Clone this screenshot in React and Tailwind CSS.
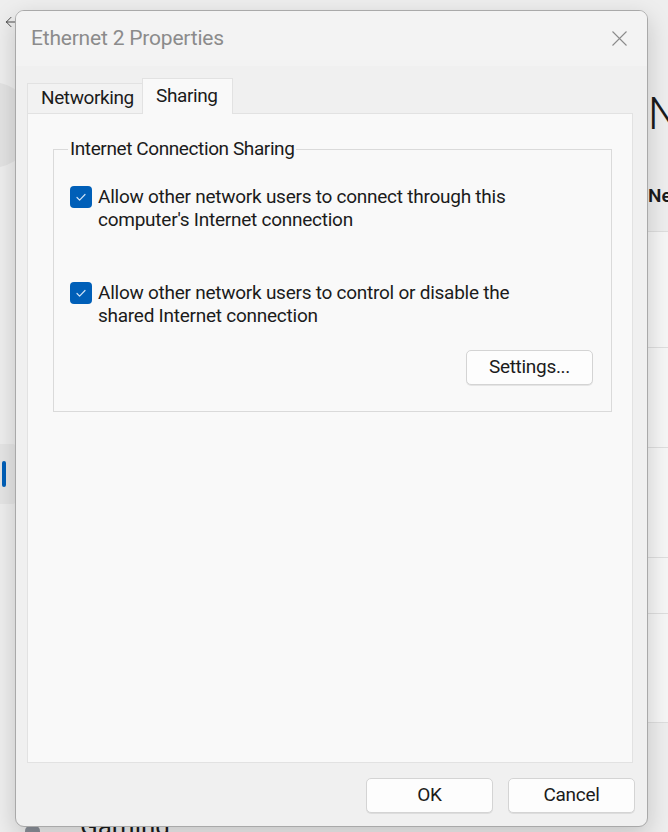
import { ArrowLeft } from "lucide-react"

const FONT = "font-['Roboto','Liberation_Sans',sans-serif]"

function Checkbox() {
  return (
    <span className="mt-[1px] flex h-[22px] w-[22px] shrink-0 items-center justify-center rounded-[4px] bg-[#005fb8]">
      <svg width="12" height="12" viewBox="0 0 12 12" fill="none">
        <path d="M2 6.5l2.6 2.6L10 3.5" stroke="#cfe3f7" strokeWidth="1.2" strokeLinecap="round" strokeLinejoin="round" />
      </svg>
    </span>
  )
}

function Option({ lines }) {
  return (
    <label className="flex items-start gap-[6px]">
      <Checkbox />
      <span className="text-[19px] leading-[23px] tracking-[-0.25px] text-[#1b1b1b]">
        {lines[0]}
        <br />
        {lines[1]}
      </span>
    </label>
  )
}

function WinButton({ children }) {
  return (
    <button
      type="button"
      className="flex h-[35px] w-[127px] items-center justify-center rounded-[5px] border border-[#d4d4d4] bg-[#fdfdfd] text-[19px] tracking-[-0.3px] text-[#1b1b1b] shadow-[0_1px_0_rgba(0,0,0,0.08)]"
    >
      {children}
    </button>
  )
}

function SettingsBackdrop() {
  return (
    <div className="flex h-full w-full">
      {/* left nav remnants */}
      <div className="flex w-[40px] flex-col">
        <div className="flex h-[44px] items-center pl-[3px] text-[#333]">
          <ArrowLeft size={16} strokeWidth={1.3} />
        </div>
        <div className="ml-[-52px] mt-[38px] h-[86px] w-[86px] rounded-full bg-[#e3e3e3]" />
        <div className="mt-[276px] flex h-[60px] w-[16px] items-center rounded-r-[4px] bg-[#e5e5e5] pl-[2px]">
          <span className="h-[26px] w-[4px] rounded-full bg-[#005fb8]" />
        </div>
        <div className="mt-auto flex items-center pl-[25px]">
          <span className="mb-[-14px] h-[22px] w-[22px] rounded-full bg-[#8a8f98]" />
        </div>
      </div>
      <div className="flex-1" />
      {/* right content remnants */}
      <div className="flex w-[20px] flex-col">
        <div className="mt-[92px] text-[44px] leading-none font-light text-[#1b1b1b]">N</div>
        <div className="mt-[46px] text-[19px] font-semibold text-[#1b1b1b]">Ne</div>
        <div className="mt-[20px] h-[116px] border-t border-[#dedede] bg-[#f6f6f6]" />
        <div className="h-[100px] border-t border-[#dedede] bg-[#f6f6f6]" />
        <div className="h-[110px] border-t border-[#dedede] bg-[#f6f6f6]" />
        <div className="h-[56px] border-t border-[#dedede] bg-[#f6f6f6]" />
        <div className="h-[110px] border-t border-b border-[#dedede] bg-[#f6f6f6]" />
      </div>
    </div>
  )
}

export default function App() {
  return (
    <div className={`relative h-[832px] w-[668px] overflow-hidden bg-[#eeeeee] ${FONT}`}>
      <SettingsBackdrop />
      <div className="absolute bottom-[-14px] left-[80px] text-[26px] text-[#1b1b1b]">Gaming</div>

      {/* dialog window */}
      <div className="absolute left-[15px] top-[10px] flex h-[817px] w-[633px] flex-col overflow-hidden rounded-[9px] border border-[#a9a9a9] bg-[#f0f0f0] shadow-[0_8px_24px_rgba(0,0,0,0.18)]">
        <div className="flex h-[55px] shrink-0 items-center justify-between bg-[#f3f3f3] pl-[15px] pr-[20px]">
          <span className="text-[21px] tracking-[-0.2px] text-[#8b8b8b]">Ethernet 2 Properties</span>
          <svg width="15" height="15" viewBox="0 0 15 15" fill="none">
            <path d="M0.5 0.5l14 14M14.5 0.5l-14 14" stroke="#8b8b8b" strokeWidth="1.1" />
          </svg>
        </div>

        <div className="flex flex-1 flex-col pl-[11px] pr-[14px] pt-[12px]">
          {/* tabs */}
          <div className="flex h-[35px] items-end">
            <div className="flex h-[30px] w-[115px] items-center border-l border-t border-[#e2e2e2] bg-[#f2f2f2] pl-[13px] text-[19px] tracking-[-0.4px] text-[#1b1b1b]">
              Networking
            </div>
            <div className="relative z-10 mb-[-1px] flex h-[36px] w-[91px] items-start border border-b-0 border-[#e2e2e2] bg-[#f9f9f9] pl-[13px] pt-[3px] text-[19px] tracking-[-0.4px] text-[#1b1b1b]">
              Sharing
            </div>
          </div>

          {/* tab panel */}
          <div className="h-[650px] border border-[#e2e2e2] bg-[#f9f9f9] pl-[25px] pr-[20px] pt-[21px]">
            <fieldset className="h-[277px] border border-[#dadada] px-[16px] pb-0 pt-[21px]">
              <legend className="ml-[-2px] px-[2px] text-[19px] tracking-[-0.4px] text-[#1b1b1b]">
                Internet Connection Sharing
              </legend>
              <div className="flex flex-col">
                <Option lines={["Allow other network users to connect through this", "computer's Internet connection"]} />
                <div className="mt-[50px]">
                  <Option lines={["Allow other network users to control or disable the", "shared Internet connection"]} />
                </div>
                <div className="mt-[23px] flex justify-end pr-[2px]">
                  <WinButton>Settings...</WinButton>
                </div>
              </div>
            </fieldset>
          </div>

          {/* footer */}
          <div className="mr-[-2px] flex justify-end gap-[15px] pt-[15px]">
            <WinButton>OK</WinButton>
            <WinButton>Cancel</WinButton>
          </div>
        </div>
      </div>
    </div>
  )
}
